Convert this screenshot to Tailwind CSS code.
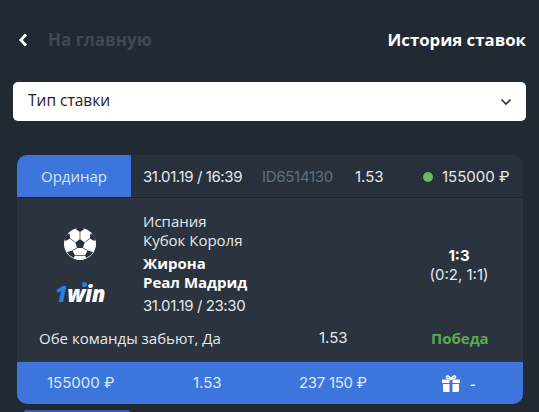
<!DOCTYPE html>
<html lang="en">
<head>
    <meta charset="UTF-8">
    <meta name="viewport" content="width=device-width, initial-scale=1.0">
    <title>История ставок</title>
    <script src="https://cdn.jsdelivr.net/npm/@tailwindcss/browser@4"></script>
</head>
<body class="bg-[#212932] h-[412px] w-[539px] overflow-hidden font-['Open_Sans',sans-serif] text-[#e6e9ec]">
    <!-- top bar -->
    <div class="flex items-center justify-between h-[80px] pl-[18px] pr-[13px]">
        <div class="flex items-center">
            <svg class="w-[10px] h-[14px]" viewBox="0 0 10 14" fill="none" stroke="#fff" stroke-width="2.8"><path d="M8 1.500 2.800 7 8 12.500"/></svg>
            <span class="ml-[20px] text-[17px] font-bold text-[#3f4a57]">На главную</span>
        </div>
        <span class="text-[16.800px] font-bold text-white">История ставок</span>
    </div>

    <!-- select -->
    <div class="mx-[13px] h-[39px] mt-[2px] bg-white rounded-[5px] flex items-center justify-between pl-[15px] pr-[14px]">
        <span class="text-[15.500px] text-[#1c2026] pb-[2px]">Тип ставки</span>
        <svg class="w-[12px] h-[8px]" viewBox="0 0 12 8" fill="none" stroke="#2a323b" stroke-width="1.600"><path d="M1.500 1.500 6 6l4.500-4.500"/></svg>
    </div>

    <!-- bet card -->
    <div class="mx-[17px] mt-[34px] w-[506px] bg-[#2a333e] rounded-[10px] overflow-hidden">
        <div class="flex items-center h-[43px] bg-[#28313b] border-b border-[#1c232b] text-[15px]">
            <div class="w-[114px] h-full bg-[#3c76dc] flex items-center justify-center text-[#d9e5f8] pt-[1px]">Ординар</div>
            <div class="flex items-center h-full pt-[3px]">
                <span class="ml-[12px] w-[119px] font-['Inter',sans-serif] tracking-[-0.4px]">31.01.19 / 16:39</span>
                <span class="w-[93px] text-[#5f6f80] font-['Inter',sans-serif] tracking-[-0.3px]">ID6514130</span>
                <span class="w-[68px] font-['Inter',sans-serif]">1.53</span>
                <span class="w-[10px] h-[10px] rounded-full bg-[#6eb95a] -mt-[2px]"></span>
                <span class="ml-[9px] font-['Inter',sans-serif] whitespace-nowrap">155000 ₽</span>
            </div>
        </div>

        <div class="flex h-[118px]">
            <div class="w-[126px] flex flex-col items-center pt-[30px]">
                <svg class="w-[32px] h-[32px]" viewBox="0 0 32 32">
                    <circle cx="16" cy="16" r="16" fill="#fff"/>
                    <path d="M16 11 20.700 14.500 18.900 20H13.100L11.300 14.500Z" fill="#28313b"/>
                    <path d="M11.500 1 16 4 20.500 1 19 0H13ZM26.500 5.500 25.800 10.500 30.500 13 31.500 11 29 6.500ZM5.500 5.500 6.200 10.500 1.500 13 .5 11 3 6.500ZM3 24 8.500 22.500 11 27.500 9.500 30 5 27ZM29 24 23.500 22.500 21 27.500 22.500 30 27 27Z" fill="#28313b"/>
                    <path d="M16 4V11M20.700 14.500 25.800 10.500M11.300 14.500 6.200 10.500M13.100 20 8.500 22.500M18.900 20 23.500 22.500M11 27.500H21" stroke="#28313b" stroke-width=".700" fill="none"/>
                </svg>
                <div class="relative mt-[20px] text-[22px] leading-[26px] font-extrabold italic tracking-[-0.3px] text-white">
                    <span class="text-[#2f7fe0]">1</span>win
                    <span class="absolute left-[27px] top-[2px] w-[5px] h-[5px] rounded-full bg-[#2f7fe0]"></span>
                </div>
            </div>
            <div class="pt-[14px] text-[15px] leading-[19px]">
                <div>Испания</div>
                <div>Кубок Короля</div>
                <div class="mt-[4px] font-bold text-white">Жирона</div>
                <div class="font-bold text-white">Реал Мадрид</div>
                <div class="mt-[4px] font-['Inter',sans-serif] tracking-[-0.4px]">31.01.19 / 23:30</div>
            </div>
            <div class="ml-auto w-[128px] pt-[48px] text-center text-[15px] leading-[19px] font-['Inter',sans-serif]">
                <div class="font-bold text-white">1:3</div>
                <div>(0:2, 1:1)</div>
            </div>
        </div>

        <div class="flex items-center h-[45px] text-[15px] pb-[1px]">
            <span class="ml-[22px] w-[280px]">Обе команды забьют, Да</span>
            <span class="w-[112px] font-['Inter',sans-serif]">1.53</span>
            <span class="font-bold text-[#5fa84f]">Победа</span>
        </div>

        <div class="flex items-center h-[43px] bg-[#3c76dc] border-t border-[#1c3a6e] text-[15px] text-[#dce7f9] font-['Inter',sans-serif]">
            <span class="ml-[30px] w-[146px] whitespace-nowrap">155000 ₽</span>
            <span class="w-[106px]">1.53</span>
            <span class="w-[143px] whitespace-nowrap tracking-[-0.3px]">237 150 ₽</span>
            <svg class="w-[18px] h-[17px]" viewBox="0 0 18 17" fill="#fff">
                <path d="M0 4.500h7.500v3.500H0ZM10.500 4.500H18v3.500h-7.500ZM1 9h6.500v8H2.500A1.500 1.500 0 0 1 1 15.500ZM10.500 9H17v6.500a1.500 1.500 0 0 1-1.500 1.500h-5Z"/>
                <path d="M9 4C7 .5 5 .5 4.500 1.500S5 4 9 4C13 4 14 2.500 13.500 1.500S11 .5 9 4Z" fill="none" stroke="#fff" stroke-width="1.500"/>
            </svg>
            <span class="ml-[10px] text-[12px] font-bold text-white pt-[4px]">-</span>
        </div>
    </div>

    <!-- start of next card -->
    <div class="ml-[24px] mt-[6px] w-[106px] h-[2px] bg-[#2f5fae] rounded-t-[2px]"></div>
</body>
</html>
